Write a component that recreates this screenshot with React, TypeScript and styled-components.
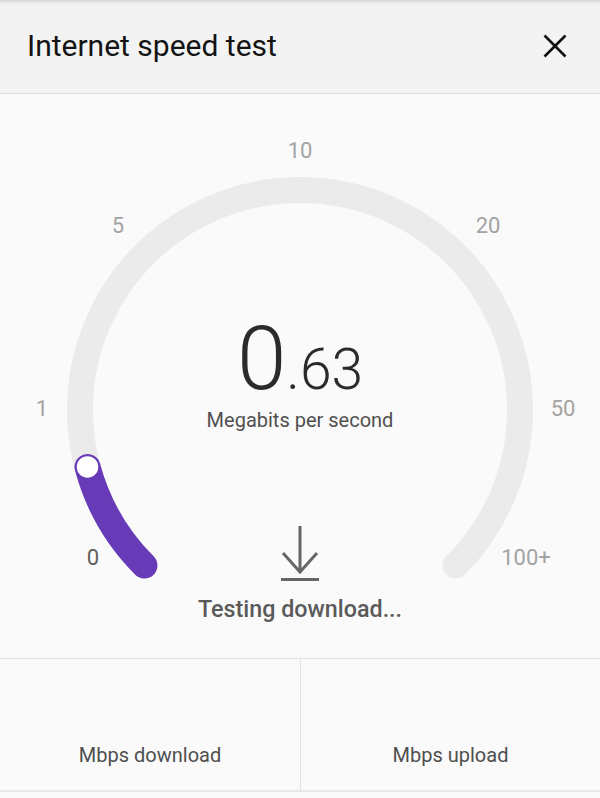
import React from 'react';
import styled, { createGlobalStyle } from 'styled-components';

const GlobalStyle = createGlobalStyle`
  html, body {
    margin: 0;
    padding: 0;
    background: #fafafa;
    font-family: Roboto, "Noto Sans", "Liberation Sans", sans-serif;
  }
`;

const Screen = styled.div`
  width: 600px;
  height: 798px;
  display: flex;
  flex-direction: column;
  background: #fafafa;
  overflow: hidden;
`;

const Header = styled.header`
  height: 94px;
  flex-shrink: 0;
  display: flex;
  align-items: center;
  justify-content: space-between;
  padding: 0 29px 0 27px;
  box-sizing: border-box;
  background: linear-gradient(#d6d6d6 0, #ececec 3px, #f3f3f3 6px, #f3f3f3 100%);
  border-bottom: 1px solid #dcdcdc;
`;

const Title = styled.h1`
  margin: 0 0 2px;
  font-size: 30px;
  font-weight: 400;
  color: #141414;
`;

const CloseButton = styled.button`
  border: 0;
  background: none;
  padding: 0;
  width: 32px;
  height: 32px;
  display: flex;
  align-items: center;
  justify-content: center;
  margin-bottom: 2px;
`;

const Gauge = styled.section`
  position: relative;
  height: 564px;
  flex-shrink: 0;
`;

const Overlay = styled.div`
  position: absolute;
  inset: 0;
  display: flex;
  flex-direction: column;
  align-items: center;
  padding-top: 220px;
  box-sizing: border-box;
`;

const Readout = styled.div`
  display: flex;
  align-items: baseline;
  color: #2b2b2b;
  font-weight: 300;
  line-height: 1;
`;

const Whole = styled.span`
  font-size: 89px;
`;

const Fraction = styled.span`
  font-size: 57px;
`;

const Unit = styled.div`
  margin-top: 5px;
  font-size: 20px;
  color: #505050;
`;

const Status = styled.div`
  margin-top: 94px;
  display: flex;
  flex-direction: column;
  align-items: center;
  gap: 13px;
`;

const StatusText = styled.div`
  font-size: 23.3px;
  font-weight: 500;
  color: #5a5a5a;
`;

const Results = styled.div`
  display: grid;
  grid-template-columns: 1fr 1fr;
  height: 131px;
  border-top: 1px solid #e2e2e2;
  border-bottom: 2px solid #e8e8e8;
`;

const ResultCell = styled.div<{ $divider?: boolean }>`
  display: flex;
  align-items: flex-end;
  justify-content: center;
  padding-bottom: 23px;
  font-size: 20px;
  color: #4f4f4f;
  border-left: ${p => (p.$divider ? '1px solid #e2e2e2' : 'none')};
`;

const CX = 300;
const CY = 316;
const R = 220;

const point = (deg: number, r = R) => {
  const a = (deg * Math.PI) / 180;
  return [CX + r * Math.sin(a), CY - r * Math.cos(a)];
};

const arc = (from: number, to: number) => {
  const [x1, y1] = point(from);
  const [x2, y2] = point(to);
  const large = to - from > 180 ? 1 : 0;
  return `M ${x1} ${y1} A ${R} ${R} 0 ${large} 1 ${x2} ${y2}`;
};

const labels = [
  { text: '0', x: 93, y: 463, active: true },
  { text: '1', x: 42, y: 314 },
  { text: '5', x: 118, y: 131 },
  { text: '10', x: 300, y: 56 },
  { text: '20', x: 488, y: 131 },
  { text: '50', x: 563, y: 314 },
  { text: '100+', x: 526, y: 463 },
];

const progress = -105;

const Dial = () => {
  const [kx, ky] = point(progress);
  return (
    <svg width="600" height="564" viewBox="0 0 600 564">
      <path d={arc(-135, 135)} fill="none" stroke="#ebebeb" strokeWidth="26" strokeLinecap="round" />
      <path d={arc(-135, progress)} fill="none" stroke="#673ab7" strokeWidth="26" strokeLinecap="round" />
      <circle cx={kx} cy={ky} r="11.5" fill="#fff" stroke="#673ab7" strokeWidth="1.5" />
      {labels.map(l => (
        <text
          key={l.text}
          x={l.x}
          y={l.y}
          textAnchor="middle"
          dominantBaseline="central"
          fontFamily="Roboto, sans-serif"
          fontSize="22"
          fill={l.active ? '#5f5f5f' : '#a3a3a3'}
        >
          {l.text}
        </text>
      ))}
    </svg>
  );
};

const DownloadIcon = () => (
  <svg width="42" height="56" viewBox="0 0 42 56">
    <g fill="none" stroke="#666" strokeWidth="3">
      <path d="M21 0 V46" />
      <path d="M4 27 L21 46 L38 27" />
      <path d="M2 53.5 H40" />
    </g>
  </svg>
);

export default function App() {
  return (
    <Screen>
      <GlobalStyle />
      <Header>
        <Title>Internet speed test</Title>
        <CloseButton aria-label="Close">
          <svg width="24" height="24" viewBox="0 0 24 24">
            <path d="M1.5 1.5 L22.5 22.5 M22.5 1.5 L1.5 22.5" stroke="#111" strokeWidth="2.6" />
          </svg>
        </CloseButton>
      </Header>
      <Gauge>
        <Dial />
        <Overlay>
          <Readout>
            <Whole>0</Whole>
            <Fraction>.63</Fraction>
          </Readout>
          <Unit>Megabits per second</Unit>
          <Status>
            <DownloadIcon />
            <StatusText>Testing download...</StatusText>
          </Status>
        </Overlay>
      </Gauge>
      <Results>
        <ResultCell>Mbps download</ResultCell>
        <ResultCell $divider>Mbps upload</ResultCell>
      </Results>
    </Screen>
  );
}
